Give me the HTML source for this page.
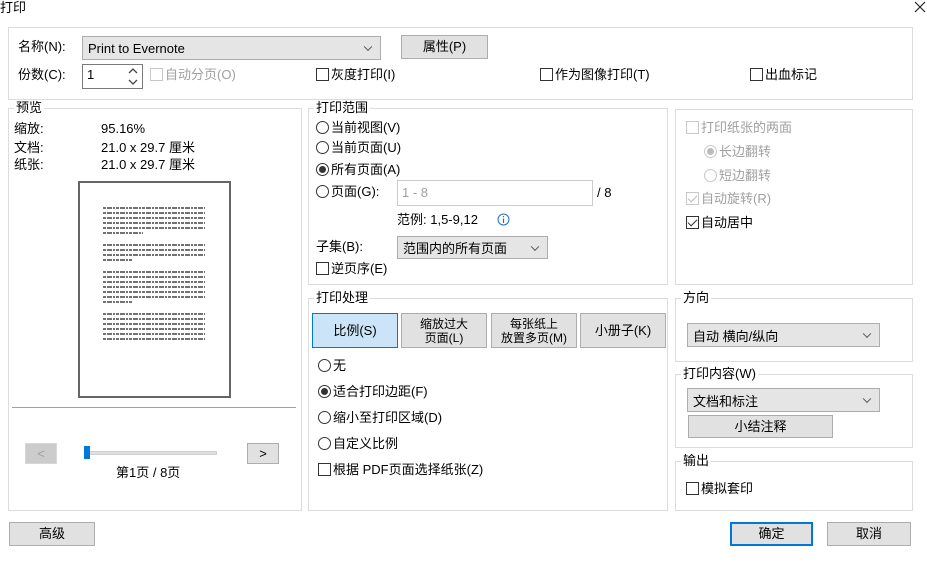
<!DOCTYPE html>
<html><head><meta charset="utf-8"><style>
*{box-sizing:border-box;margin:0;padding:0}
body{width:927px;height:563px;background:#fff;position:relative;overflow:hidden;font-family:"Liberation Sans","Noto Sans CJK SC",sans-serif;font-size:13px;color:#000}
.a{position:absolute;white-space:nowrap;line-height:16px}
.g{position:absolute;border:1px solid #dcdcdc}
.gt{position:absolute;background:#fff;padding:0 2px;line-height:14px;white-space:nowrap}
.btn{position:absolute;background:#e1e1e1;border:1px solid #adadad;text-align:center;display:flex;align-items:center;justify-content:center;line-height:14px}
.dd{position:absolute;background:#e5e5e5;border:1px solid #adadad;padding-left:5px;display:flex;align-items:center}
.dd:after{content:"";position:absolute;right:9px;top:50%;width:5px;height:5px;border-right:1px solid #555;border-bottom:1px solid #555;transform:translateY(-70%) rotate(45deg)}
.cb{display:inline-block;width:13px;height:13px;border:1px solid #333;vertical-align:-2px;margin-right:2px;background:#fff;position:relative}
.cb.d{border-color:#c8c8c8}
.rb{display:inline-block;width:13px;height:13px;border:1px solid #333;border-radius:50%;vertical-align:-2px;margin-right:2px;position:relative;background:#fff}
.rb.on:after{content:"";position:absolute;left:2px;top:2px;width:7px;height:7px;border-radius:50%;background:#333}
.rb.d{border-color:#c8c8c8}
.rb.d.on:after{background:#bbb}
.ck:after{content:"";position:absolute;left:3px;top:0px;width:4px;height:8px;border-right:1.3px solid #333;border-bottom:1.3px solid #333;transform:rotate(45deg)}
.ck.d:after{border-color:#bbb}
.gray{color:#a0a0a0}
</style></head><body>
<div class="a" style="left:0;top:0">打印</div>
<svg class="a" style="left:914px;top:1px" width="12" height="12"><path d="M1 1L11 11M11 1L1 11" stroke="#222" stroke-width="1.2"/></svg>

<div class="g" style="left:8px;top:27px;width:905px;height:73px"></div>
<div class="a" style="left:18px;top:39px">名称(N):</div>
<div class="dd" style="left:82px;top:36px;width:299px;height:24px">Print to Evernote</div>
<div class="btn" style="left:401px;top:35px;width:87px;height:24px">属性(P)</div>
<div class="a" style="left:18px;top:67px">份数(C):</div>
<div class="a" style="left:82px;top:64px;width:61px;height:25px;border:1px solid #7a7a7a;padding:2px 4px">1</div>
<svg class="a" style="left:127px;top:66px" width="12" height="21"><path d="M2 7L6 3L10 7M2 14L6 18L10 14" fill="none" stroke="#444" stroke-width="1.3"/></svg>
<div class="a gray" style="left:150px;top:67px"><span class="cb d"></span>自动分页(O)</div>
<div class="a" style="left:316px;top:67px"><span class="cb"></span>灰度打印(I)</div>
<div class="a" style="left:540px;top:67px"><span class="cb"></span>作为图像打印(T)</div>
<div class="a" style="left:750px;top:67px"><span class="cb"></span>出血标记</div>

<div class="g" style="left:8px;top:108px;width:294px;height:403px"></div>
<div class="gt" style="left:14px;top:101px">预览</div>
<div class="a" style="left:14px;top:121px">缩放:</div><div class="a" style="left:101px;top:121px">95.16%</div>
<div class="a" style="left:14px;top:140px">文档:</div><div class="a" style="left:101px;top:140px">21.0 x 29.7 厘米</div>
<div class="a" style="left:14px;top:157px">纸张:</div><div class="a" style="left:101px;top:157px">21.0 x 29.7 厘米</div>
<div class="a" style="left:78px;top:181px;width:153px;height:217px;border:2px solid #666;background:#fff"></div>
<svg class="a" style="left:103px;top:206px" width="104" height="164">
<g stroke="#444" stroke-width="1.4" stroke-dasharray="3 1 5 1 2 1">
<path d="M0 2H102M0 7H102M0 12H102M0 17H102M0 22H102M0 27H40"/>
<path d="M0 39H102M0 44H102M0 49H102M0 54H30"/>
<path d="M0 66H102M0 71H102M0 76H102M0 81H102M0 86H102M0 91H102M0 96H30"/>
<path d="M0 108H102M0 113H102M0 118H102M0 123H102M0 128H102M0 133H102"/>
</g></svg>
<div class="a" style="left:12px;top:407px;width:284px;height:1px;background:#a0a0a0"></div>
<div class="btn gray" style="left:25px;top:443px;width:32px;height:21px;background:#ccc;border-color:#d8d8d8">&lt;</div>
<div class="a" style="left:84px;top:451px;width:133px;height:4px;background:#e0e0e0;border:1px solid #d0d0d0"></div>
<div class="a" style="left:84px;top:446px;width:6px;height:13px;background:#0078d7"></div>
<div class="btn" style="left:247px;top:443px;width:32px;height:21px">&gt;</div>
<div class="a" style="left:116px;top:465px">第1页 / 8页</div>
<div class="btn" style="left:9px;top:522px;width:86px;height:24px">高级</div>

<div class="g" style="left:308px;top:108px;width:360px;height:177px"></div>
<div class="gt" style="left:314px;top:101px">打印范围</div>
<div class="a" style="left:316px;top:120px"><span class="rb"></span>当前视图(V)</div>
<div class="a" style="left:316px;top:140px"><span class="rb"></span>当前页面(U)</div>
<div class="a" style="left:316px;top:162px"><span class="rb on"></span>所有页面(A)</div>
<div class="a" style="left:316px;top:184px"><span class="rb"></span>页面(G):</div>
<div class="a gray" style="left:397px;top:180px;width:196px;height:26px;border:1px solid #ccc;padding:4px 4px">1 - 8</div>
<div class="a" style="left:597px;top:185px">/ 8</div>
<div class="a" style="left:397px;top:212px">范例: 1,5-9,12</div>
<svg class="a" style="left:497px;top:213px" width="13" height="13"><circle cx="6.5" cy="6.5" r="5.5" fill="none" stroke="#1e6fd0"/><path d="M6.5 5.5V10M6.5 3V4.2" stroke="#1e6fd0" stroke-width="1.2"/></svg>
<div class="a" style="left:316px;top:239px">子集(B):</div>
<div class="dd" style="left:397px;top:236px;width:151px;height:23px">范围内的所有页面</div>
<div class="a" style="left:316px;top:261px"><span class="cb"></span>逆页序(E)</div>

<div class="g" style="left:308px;top:298px;width:360px;height:213px"></div>
<div class="gt" style="left:314px;top:291px">打印处理</div>
<div class="btn" style="left:312px;top:313px;width:86px;height:35px;background:#cce4f7;border-color:#0078d7">比例(S)</div>
<div class="btn" style="left:401px;top:313px;width:86px;height:35px;font-size:12px">缩放过大<br>页面(L)</div>
<div class="btn" style="left:491px;top:313px;width:86px;height:35px;font-size:12px">每张纸上<br>放置多页(M)</div>
<div class="btn" style="left:580px;top:313px;width:86px;height:35px">小册子(K)</div>
<div class="a" style="left:318px;top:358px"><span class="rb"></span>无</div>
<div class="a" style="left:318px;top:384px"><span class="rb on"></span>适合打印边距(F)</div>
<div class="a" style="left:318px;top:410px"><span class="rb"></span>缩小至打印区域(D)</div>
<div class="a" style="left:318px;top:436px"><span class="rb"></span>自定义比例</div>
<div class="a" style="left:318px;top:462px"><span class="cb"></span>根据 PDF页面选择纸张(Z)</div>

<div class="g" style="left:675px;top:109px;width:238px;height:176px"></div>
<div class="a gray" style="left:686px;top:120px"><span class="cb d"></span>打印纸张的两面</div>
<div class="a gray" style="left:704px;top:144px"><span class="rb d on"></span>长边翻转</div>
<div class="a gray" style="left:704px;top:168px"><span class="rb d"></span>短边翻转</div>
<div class="a gray" style="left:686px;top:191px"><span class="cb d ck"></span>自动旋转(R)</div>
<div class="a" style="left:686px;top:215px"><span class="cb ck"></span>自动居中</div>

<div class="g" style="left:675px;top:298px;width:238px;height:64px"></div>
<div class="gt" style="left:681px;top:291px">方向</div>
<div class="dd" style="left:687px;top:323px;width:193px;height:24px">自动 横向/纵向</div>

<div class="g" style="left:675px;top:374px;width:238px;height:74px"></div>
<div class="gt" style="left:681px;top:367px">打印内容(W)</div>
<div class="dd" style="left:687px;top:388px;width:193px;height:24px">文档和标注</div>
<div class="btn" style="left:688px;top:415px;width:145px;height:23px">小结注释</div>

<div class="g" style="left:675px;top:461px;width:238px;height:50px"></div>
<div class="gt" style="left:681px;top:454px">输出</div>
<div class="a" style="left:686px;top:481px"><span class="cb"></span>模拟套印</div>

<div class="btn" style="left:730px;top:522px;width:83px;height:24px;border:2px solid #0078d7">确定</div>
<div class="btn" style="left:827px;top:522px;width:84px;height:24px">取消</div>
</body></html>
